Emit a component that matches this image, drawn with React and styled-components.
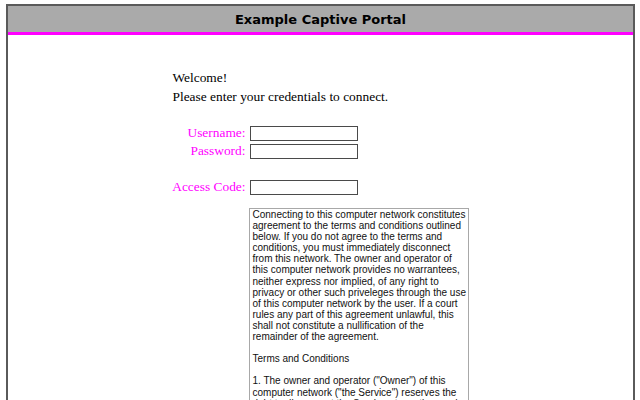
import React from "react";
import styled, { createGlobalStyle } from "styled-components";

const Global = createGlobalStyle`
  html, body {
    margin: 0;
    padding: 0;
    background: #ffffff;
  }
  body {
    font-family: "Liberation Serif", "Times New Roman", serif;
    overflow: hidden;
  }
`;

const Frame = styled.div`
  margin: 4px 5px 0 6px;
  border: 2px solid #5a5a5a;
  border-bottom: none;
  min-height: 420px;
  box-sizing: border-box;
`;

const Banner = styled.header`
  height: 26px;
  background: #aaaaaa;
  border-bottom: 3px solid #ff00ff;
  display: flex;
  align-items: center;
  justify-content: center;
  font-family: "DejaVu Sans", Verdana, sans-serif;
  font-weight: bold;
  font-size: 13px;
  color: #000;
`;

const Column = styled.main`
  width: 296px;
  margin: 33px auto 0;
  display: flex;
  flex-direction: column;
`;

const Greeting = styled.p`
  margin: 0;
  font-size: 13.4px;
  line-height: 19px;
  color: #000;
`;

const Form = styled.form`
  margin-top: 18px;
  display: grid;
  grid-template-columns: 73px 108px;
  column-gap: 4px;
  grid-auto-rows: 18px;
  align-items: center;
`;

const Label = styled.label`
  justify-self: end;
  font-size: 13.4px;
  color: #ff00ff;
  white-space: nowrap;
`;

const Field = styled.input`
  box-sizing: border-box;
  width: 108px;
  height: 15px;
  margin: 0;
  padding: 0 2px;
  border: 1px solid #4a4a4a;
  background: #fff;
  font-size: 11px;
`;

const Spacer = styled.div`
  grid-column: 1 / -1;
  height: 19px;
`;

const Terms = styled.div`
  margin: 12px 0 0 76px;
  width: 220px;
  height: 260px;
  box-sizing: border-box;
  border: 1px solid #a8a8a8;
  padding: 0 1px 0 3px;
  overflow: hidden;
  font-family: "Liberation Sans", Arial, sans-serif;
  font-size: 10px;
  line-height: 11.1px;
  color: #111;
`;

const Para = styled.p`
  margin: 0 0 11.1px;
`;

export default function App() {
  return (
    <>
      <Global />
      <Frame>
        <Banner>Example Captive Portal</Banner>
        <Column>
          <Greeting>
            Welcome!
            <br />
            Please enter your credentials to connect.
          </Greeting>
          <Form onSubmit={(e) => e.preventDefault()}>
            <Label htmlFor="username">Username:</Label>
            <Field id="username" type="text" />
            <Label htmlFor="password">Password:</Label>
            <Field id="password" type="password" />
            <Spacer />
            <Label htmlFor="access">Access Code:</Label>
            <Field id="access" type="text" />
          </Form>
          <Terms>
            <Para>
              Connecting to this computer network constitutes agreement to the
              terms and conditions outlined below. If you do not agree to the
              terms and conditions, you must immediately disconnect from this
              network. The owner and operator of this computer network provides
              no warrantees, neither express nor implied, of any right to
              privacy or other such priveleges through the use of this computer
              network by the user. If a court rules any part of this agreement
              unlawful, this shall not constitute a nullification of the
              remainder of the agreement.
            </Para>
            <Para>Terms and Conditions</Para>
            <Para>
              1. The owner and operator ("Owner") of this computer network ("the
              Service") reserves the right to disconnect the Service at any time
              and for any reason, without notice to the user.
            </Para>
          </Terms>
        </Column>
      </Frame>
    </>
  );
}
